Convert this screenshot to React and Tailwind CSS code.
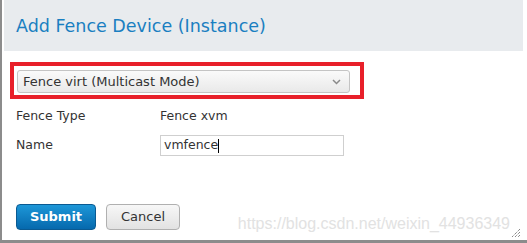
import React from "react";

const font = { fontFamily: '"DejaVu Sans", "Liberation Sans", sans-serif' };

export default function App() {
  return (
    <div
      className="relative w-[527px] h-[243px] bg-white border-l-2 border-b-[3px] border-[#8c8c8c] overflow-hidden text-[#333]"
      style={font}
    >
      <div className="ml-[2px] w-[519px] h-[51px] bg-[#e8ebee] pl-[12px] pt-[15px]">
        <h1 className="text-[17.5px] leading-[22px] text-[#1a7fc1]">Add Fence Device (Instance)</h1>
      </div>

      <div className="ml-[8px] mt-[11px] w-[354px] h-[37px] border-[4px] border-[#e8202a] pl-[3px] pt-[4px]">
        <div className="w-[333px] h-[23px] rounded-[3px] border border-[#c4c4c4] bg-gradient-to-b from-[#fafafa] to-[#e9e9e9] flex items-center justify-between pl-[5px] pr-[8px]">
          <span className="text-[13px] text-[#333]">Fence virt (Multicast Mode)</span>
          <svg width="9" height="6" viewBox="0 0 9 6" className="mt-[1px]">
            <path d="M1 1 L4.5 4.5 L8 1" fill="none" stroke="#8a8a8a" strokeWidth="1.5" />
          </svg>
        </div>
      </div>

      <div className="ml-[14px] mt-[7px] grid grid-cols-[144px_1fr] gap-y-[9px] text-[12.5px] text-[#333]">
        <div className="h-[20px] flex items-center">Fence Type</div>
        <div className="h-[20px] flex items-center">Fence xvm</div>
        <div className="h-[21px] flex items-center">Name</div>
        <div className="w-[184px] h-[21px] border border-[#cfcfcf] flex items-center pl-[3px]">
          vmfence<span className="inline-block w-px h-[14px] bg-black" />
        </div>
      </div>

      <div className="ml-[14px] mt-[48px] flex gap-[10px]">
        <button className="w-[80px] h-[26px] rounded-[4px] border border-[#0a5a92] bg-gradient-to-b from-[#1d97d8] to-[#0669ad] text-white text-[13px] font-bold">
          Submit
        </button>
        <button className="w-[74px] h-[26px] rounded-[4px] border border-[#b0b0b0] bg-gradient-to-b from-[#f7f7f7] to-[#e2e2e2] text-[#333] text-[13px]">
          Cancel
        </button>
      </div>

      <div className="absolute right-[17px] bottom-[8px] text-[16px] text-[#e2e2e2] leading-none" style={{ fontFamily: '"Liberation Sans", sans-serif' }}>
        https://blog.csdn.net/weixin_44936349
      </div>
      <svg className="absolute right-[6px] bottom-[2px]" width="12" height="12" viewBox="0 0 12 12">
        <path d="M11 3 L3 11 M11 6 L6 11 M11 9 L9 11" stroke="#555" strokeWidth="1" strokeDasharray="1 1" />
      </svg>
    </div>
  );
}
